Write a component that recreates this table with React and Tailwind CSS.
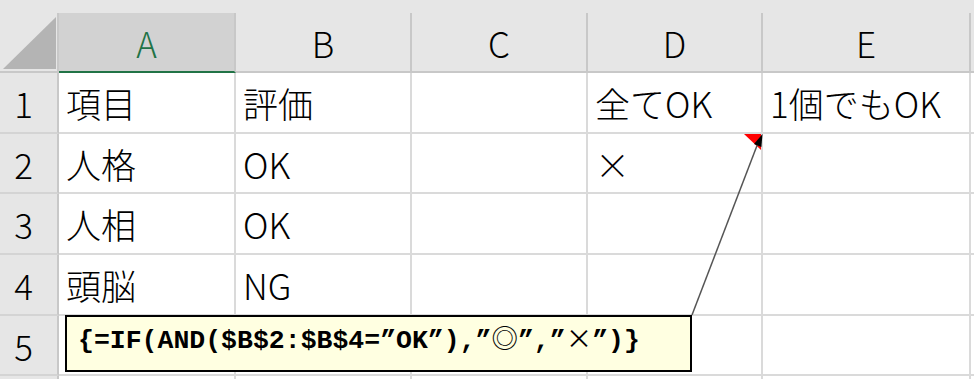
import React from 'react';

// Column headers with the widths taken from the sheet (right gridline included)
const COLUMNS = [
  { key: 'A', width: 'w-[177px]', selected: true },
  { key: 'B', width: 'w-[176px]' },
  { key: 'C', width: 'w-[176px]' },
  { key: 'D', width: 'w-[175px]' },
  { key: 'E', width: 'w-[208px]' },
];

const ROWS = [
  { n: 1, height: 'h-[61px]', cells: ['項目', '評価', '', '全てOK', '1個でもOK'] },
  { n: 2, height: 'h-[60px]', cells: ['人格', 'OK', '', '×', ''], note: true },
  { n: 3, height: 'h-[61px]', cells: ['人相', 'OK', '', '', ''] },
  { n: 4, height: 'h-[61px]', cells: ['頭脳', 'NG', '', '', ''] },
  { n: 5, height: 'h-[60px]', cells: ['', '', '', '', ''] },
  // only a sliver of row 6 is on screen, its number falls below the edge
  { n: null, height: 'h-[60px]', cells: ['', '', '', '', ''] },
];

function CornerCell() {
  return (
    <div className="h-full w-[59px] shrink-0 border-r-2 border-b-2 border-[#c8c8c8]">
      <svg width="57" height="58" viewBox="0 0 57 58" className="block">
        <polygon points="3,56 56,56 56,4" fill="#b4b4b4" />
      </svg>
    </div>
  );
}

function ColumnHeader({ label, width, selected }) {
  return (
    <div
      className={`flex h-full shrink-0 items-center justify-center border-r-2 text-[35px] leading-none ${width} ${
        selected
          ? 'border-r-[#c8c8c8] border-b-2 border-b-[#217346] bg-[#d2d2d2] text-[#217346]'
          : 'border-r-[#c8c8c8] border-b-2 border-b-[#c8c8c8] text-black'
      }`}
    >
      {label}
    </div>
  );
}

function CommentNote() {
  return (
    <div className="absolute right-0 top-0 h-[16px] w-[17px]">
      <svg width="17" height="16" viewBox="0 0 17 16" className="block">
        <polygon points="0,0 17,0 17,16" fill="#ff0000" />
      </svg>
    </div>
  );
}

function Row({ row }) {
  return (
    <div className={`flex ${row.height}`}>
      <div className="flex w-[59px] shrink-0 items-center justify-center border-r-2 border-b-2 border-r-[#c8c8c8] border-b-[#d4d4d4] bg-[#e6e6e6] pr-[10px] text-[35px] leading-none">
        {row.n}
      </div>
      {row.cells.map((text, i) => (
        <div
          key={COLUMNS[i].key}
          className={`relative flex shrink-0 items-center border-r-2 border-b-2 border-[#dadada] pl-[7px] text-[35px] leading-none whitespace-nowrap ${COLUMNS[i].width}`}
        >
          {text}
          {row.note && COLUMNS[i].key === 'D' && <CommentNote />}
        </div>
      ))}
      <div className="flex-1 border-b-2 border-[#dadada]" />
    </div>
  );
}

export default function App() {
  return (
    <div className="relative h-[379px] w-[974px] overflow-hidden bg-white font-['Noto_Sans_CJK_JP',sans-serif] font-light text-black">
      <div className="flex h-[73px] bg-[#e6e6e6] pt-[13px]">
        <CornerCell />
        {COLUMNS.map((col) => (
          <ColumnHeader key={col.key} label={col.key} width={col.width} selected={col.selected} />
        ))}
        <div className="flex-1 border-b-2 border-[#c8c8c8]" />
      </div>

      {ROWS.map((row, i) => (
        <Row key={i} row={row} />
      ))}

      {/* comment box and its connector */}
      <svg className="pointer-events-none absolute left-0 top-0" width="974" height="379">
        <line x1="692" y1="315" x2="758" y2="143" stroke="#555555" strokeWidth="1.5" />
        <polygon points="762.5,134 761.4,147 754,144" fill="#000000" />
      </svg>
      <div className="absolute left-[65px] top-[315px] h-[57px] w-[627px] border-2 border-black bg-[#ffffe1] pl-[11px] pt-[7px] font-['Liberation_Mono','Noto_Sans_CJK_JP',monospace] text-[26.5px] leading-none font-bold whitespace-nowrap">
        {'{=IF(AND($B$2:$B$4=”OK”),”'}
        <span className="font-['Noto_Sans_CJK_JP',sans-serif] font-normal">◎</span>
        {'”,”'}
        <span className="font-['Noto_Sans_CJK_JP',sans-serif] font-normal">×</span>
        {'”)}'}
      </div>
    </div>
  );
}
